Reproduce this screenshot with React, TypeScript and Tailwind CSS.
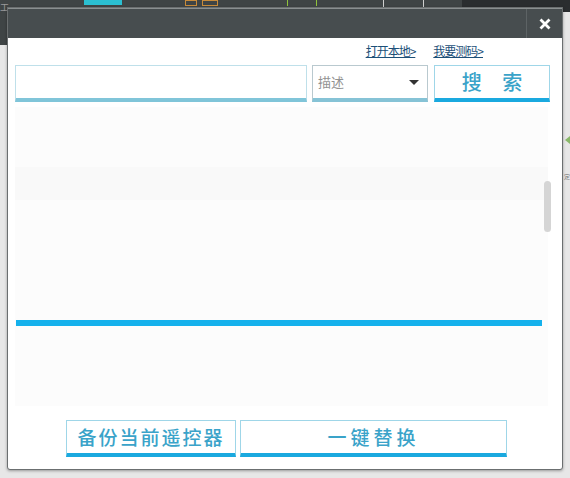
import React from 'react'

const font = { fontFamily: '"Noto Sans CJK SC", "Liberation Sans", sans-serif' }

const BlueButton = ({ label, className }: { label: string; className: string }) => (
    <button
        className={`flex items-center justify-center border border-[#9fd6e8] border-b-[4px] border-b-[#1aa9df] bg-white text-[#3aa3c9] font-medium ${className}`}
    >
        {label}
    </button>
)

export default function App() {
    return (
        <div className="relative w-[570px] h-[478px] overflow-hidden bg-[#e7e7e7]" style={font}>
            {/* desktop behind the dialog */}
            <div className="absolute left-0 top-0 w-[570px] h-[12px] bg-[#3f4445]">
                <div className="absolute left-[84px] top-0 w-[38px] h-[5px] bg-[#2bbfd1]" />
                <div className="absolute left-[185px] top-0 w-[12px] h-[6px] border border-[#c98b3a]" />
                <div className="absolute left-[202px] top-0 w-[16px] h-[6px] border border-[#c98b3a]" />
                <div className="absolute left-[287px] top-0 w-[1px] h-[6px] bg-[#8fc23a]" />
                <div className="absolute left-[316px] top-0 w-[1px] h-[6px] bg-[#8fc23a]" />
                <div className="absolute left-[383px] top-0 w-[1px] h-[7px] bg-[#cfcfcf]" />
                <div className="absolute left-[423px] top-0 w-[1px] h-[7px] bg-[#cfcfcf]" />
                <div className="absolute left-[462px] top-0 w-[108px] h-[12px] bg-[#2a2d2f]" />
            </div>
            <div className="absolute left-0 top-0 w-[7px] h-[45px] bg-[#3f4445]" />
            <div className="absolute left-0 top-[3px] text-[9px] leading-none text-[#9a9a9a]">工</div>
            <div className="absolute left-[565px] top-[136px] w-0 h-0 border-y-[4px] border-y-transparent border-r-[5px] border-r-[#8ab86a]" />
            <div className="absolute left-[564px] top-[174px] text-[6px] leading-none text-[#777]">定</div>

            {/* dialog */}
            <div className="relative z-10 ml-[7px] mt-[7px] w-[556px] h-[463px] flex flex-col bg-white border border-[#6b6f70] rounded-b-[3px] shadow-[0_1px_3px_rgba(0,0,0,0.35)]">
                <div className="h-[30px] flex justify-end bg-[#474d4f] border-t border-t-[#8a8f90]">
                    <div className="w-[36px] flex items-center justify-center border-l border-l-[#5d6365]">
                        <svg width="12" height="12" viewBox="0 0 12 12">
                            <path d="M1.5 1.5 L10.5 10.5 M10.5 1.5 L1.5 10.5" stroke="#ffffff" strokeWidth="2.8" />
                        </svg>
                    </div>
                </div>

                <div className="flex justify-end gap-[18px] pr-[79px] pt-[5px] h-[27px] text-[12px] leading-[16px] tracking-[-1px] text-[#1c4f78]">
                    <span className="underline">打开本地&gt;</span>
                    <span className="underline">我要测码&gt;</span>
                </div>

                <div className="flex pl-[7px] h-[37px]">
                    <div className="w-[292px] bg-white border border-[#bfe0ea] border-b-[4px] border-b-[#80c5d9]" />
                    <div className="ml-[5px] w-[116px] flex items-center justify-between pl-[5px] pr-[8px] bg-white border border-[#b9c9cf] border-b-[4px] border-b-[#86c3d6] text-[13px] text-[#929292]">
                        <span>描述</span>
                        <span className="w-0 h-0 border-x-[5px] border-x-transparent border-t-[5px] border-t-[#333]" />
                    </div>
                    <BlueButton label="搜 索" className="ml-[6px] w-[116px] text-[20px] tracking-[8px] pl-[8px]" />
                </div>

                <div className="relative mt-[5px] ml-[7px] w-[533px] h-[299px] bg-[#fcfcfc]">
                    <div className="mt-[60px] h-[33px] bg-[#f9f9f9]" />
                    <div className="absolute right-[-3px] top-[74px] w-[7px] h-[51px] rounded-[4px] bg-[#d5d5d5]" />
                    <div className="mt-[120px] mx-[1px] h-[6px] w-[526px] bg-[#15b1ec]" />
                </div>

                <div className="flex justify-center gap-[4px] mt-[14px] pl-[3px]">
                    <BlueButton label="备份当前遥控器" className="w-[170px] h-[37px] text-[19px] tracking-[2px]" />
                    <BlueButton label="一键替换" className="w-[267px] h-[37px] text-[19px] tracking-[4px]" />
                </div>
            </div>
        </div>
    )
}
